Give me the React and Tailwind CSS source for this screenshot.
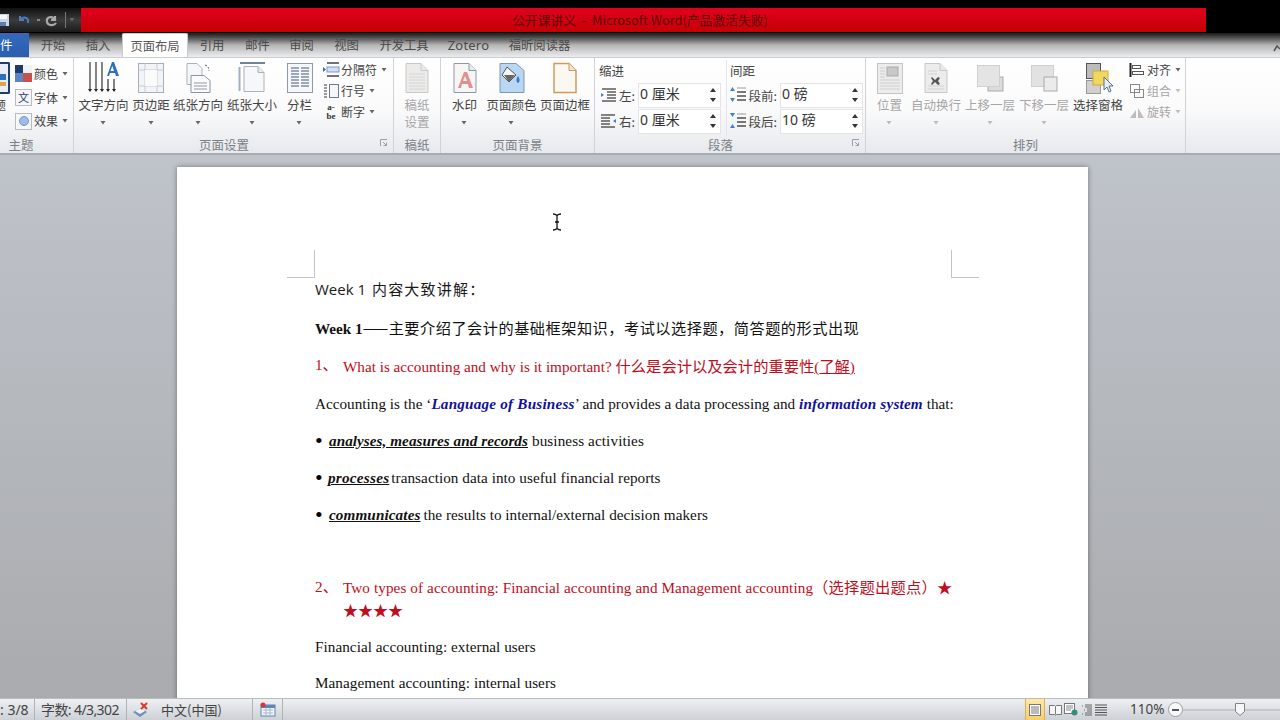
const UI = { fontFamily: '"Noto Sans CJK SC","Noto Sans",sans-serif' };
const SERIF = { fontFamily: '"Liberation Serif","Noto Sans CJK SC",serif' };
const Arrow = ({ className = '' }) => (
  <svg width="7" height="4" viewBox="0 0 7 4" className={className}><path d="M0.5 0h5L3 3.5z" fill="#666" /></svg>
);
const Doc = ({ children, s = 30, fill = '#f6f7f9', stroke = '#a9b2bd' }) => (
  <svg width={s} height="32" viewBox="0 0 30 32">
    <path d="M4 1.500h15l7 7v22H4z" fill={fill} stroke={stroke} />
    <path d="M19 1.500v7h7" fill="#e6e9ee" stroke={stroke} />
    {children}
  </svg>
);
const icons = {
  textdir: (
    <svg width="32" height="32" viewBox="0 0 32 32">
      {[1, 7, 13, 19, 25].map((x, i) => (
        <g key={x}>
          <path d={`M${x + 1} ${i < 3 ? 0 : 17}V28`} stroke="#333" strokeWidth="1.2" />
          <path d={`M${x - 1} 27h4l-2 3z`} fill="#222" />
        </g>
      ))}
      <path d="M19 14 24 0h2l5 14h-3l-1-3h-5l-1 3zM22.500 9h3.500l-1.700-5z" fill="#2f6fc0" />
    </svg>
  ),
  margins: (
    <svg width="30" height="32" viewBox="0 0 30 32">
      <rect x="2.500" y="1.500" width="25" height="29" fill="#f2f4f7" stroke="#a5afbb" />
      <path d="M9 1.500v29M21 1.500v29M2.500 8h25M2.500 24h25" stroke="#c6ccd4" />
      <rect x="9" y="8" width="12" height="16" fill="#fbfbfc" />
    </svg>
  ),
  orient: (
    <svg width="30" height="32" viewBox="0 0 30 32">
      <path d="M4 1.500h10l5 5v16H4z" fill="#f6f7f9" stroke="#a9b2bd" />
      <path d="M8 13.500h13l6 5v12H8z" fill="#fbfbfc" stroke="#8b949f" />
      <path d="M11 21h13M11 24h13M11 27h13" stroke="#8d99a8" />
      <path d="M22 3c3 1 4 3 4 6" stroke="#555" fill="none" strokeDasharray="2 1.500" />
    </svg>
  ),
  size: (
    <svg width="30" height="32" viewBox="0 0 30 32">
      <path d="M3 1h25" stroke="#42597a" strokeWidth="1.500" />
      <path d="M2.500 5v24" stroke="#9fb0c4" strokeWidth="2" />
      <path d="M7 4.500h14l6 6v19H7z" fill="#f6f7f9" stroke="#a9b2bd" />
      <path d="M21 4.500v6h6" fill="#e6e9ee" stroke="#a9b2bd" />
    </svg>
  ),
  cols: (
    <svg width="30" height="32" viewBox="0 0 30 32">
      <rect x="2.500" y="1.500" width="25" height="29" fill="#f6f7f9" stroke="#8f9aa6" />
      {[6, 9, 12, 15, 18, 21, 24].map((y) => (
        <path key={y} d={`M6 ${y}h8M16 ${y}h8`} stroke="#7f8fa3" strokeWidth="1.500" />
      ))}
    </svg>
  ),
  paper: (
    <Doc fill="#ecebea" stroke="#c9c9c9">
      {[12, 15, 18, 21, 24, 27].map((y) => <path key={y} d={`M7 ${y}h16`} stroke="#d6d6d6" />)}
    </Doc>
  ),
  water: (
    <Doc fill="#f8f6f5" stroke="#8d99a8">
      <path d="M8 26 14 10h3l6 16h-4l-1-4h-6l-1 4zM13 19h4l-2-5z" fill="#e58e90" />
    </Doc>
  ),
  color: (
    <svg width="30" height="32" viewBox="0 0 30 32">
      <path d="M3 1.500h16l8 7v22H3z" fill="#b9d6f2" stroke="#8096ad" />
      <path d="M10 5l9 8-7 7-7-7z" fill="#f4f4f4" stroke="#555" />
      <path d="M7 13h11l-6 7z" fill="#666" />
      <path d="M21 14c2 3 2 6 0 7-2-1-2-4 0-7z" fill="#2b7bd0" />
    </svg>
  ),
  border: (
    <svg width="30" height="32" viewBox="0 0 30 32">
      <path d="M4 1.500h15l7 7v22H4z" fill="#fbf8f2" stroke="#d09a5c" strokeWidth="1.500" />
      <path d="M19 1.500v7h7" fill="#f0e3d0" stroke="#c99a60" />
    </svg>
  ),
  pos: (
    <svg width="28" height="32" viewBox="0 0 28 32">
      <rect x="1.500" y="1.500" width="25" height="30" fill="#ececec" stroke="#c4c4c4" />
      <rect x="11" y="5" width="11" height="9" fill="#c8c8c8" stroke="#aaa" />
      {[6, 9, 12, 15].map((y) => <path key={y} d={`M4 ${y}h5`} stroke="#cfcfcf" />)}
      {[18, 21, 24, 27].map((y) => <path key={y} d={`M4 ${y}h20`} stroke="#cfcfcf" />)}
    </svg>
  ),
  wrap: (
    <Doc fill="#ececec" stroke="#c8c8c8">
      {[9, 12, 24, 27].map((y) => <path key={y} d={`M7 ${y}h${y < 15 ? 9 : 16}`} stroke="#d2d2d2" />)}
      <path d="M11 15l3 3 3-3 2 1-2 3 2 3-2 1-3-3-3 3-1-1 2-3-2-3z" fill="#555" />
    </Doc>
  ),
  up: (
    <svg width="30" height="32" viewBox="0 0 30 32">
      <rect x="13" y="15" width="15" height="14" fill="#dcdcdc" stroke="#aaa" />
      <rect x="2.500" y="3.500" width="22" height="21" fill="#e4e4e4" stroke="#d0d0d0" />
    </svg>
  ),
  down: (
    <svg width="30" height="32" viewBox="0 0 30 32">
      <rect x="2.500" y="3.500" width="22" height="21" fill="#e2e2e2" stroke="#d0d0d0" />
      <rect x="15" y="15" width="13" height="14" fill="#ebebeb" stroke="#aaa" />
    </svg>
  ),
  pane: (
    <svg width="30" height="32" viewBox="0 0 30 32">
      <rect x="3.500" y="1.500" width="14" height="15" fill="#bcbcbc" stroke="#555" />
      <rect x="3.500" y="18.500" width="14" height="13" fill="#d0d0d0" stroke="#999" />
      <rect x="10" y="9" width="15" height="14" fill="#f0d860" stroke="#cfa93a" />
      <path d="M21 15v13l3-3 2 5 2-1-2-5h4z" fill="#e8eef6" stroke="#5b6f88" />
    </svg>
  ),
};
const Big = ({ w, icon, label, arrow = true, muted = false, label2 }) => (
  <div className="flex flex-col items-center shrink-0 pt-[4px]" style={{ width: w }}>
    <div className="h-[32px] flex items-center justify-center">{icon}</div>
    <div className={`mt-[2px] text-[12.500px] leading-[17px] whitespace-nowrap ${muted ? 'text-[#a6a6a6]' : 'text-[#444]'}`}>{label}</div>
    {label2 && <div className={`text-[12.500px] leading-[18px] ${muted ? 'text-[#a6a6a6]' : 'text-[#444]'}`}>{label2}</div>}
    {arrow && <Arrow className={`mt-[8px] ${muted ? 'opacity-40' : ''}`} />}
  </div>
);
const Small = ({ icon, label, muted, arrowGap = 'ml-[4px]' }) => (
  <div className="h-[21px] flex items-center">
    <div className="w-[18px] h-[16px] flex items-center justify-center shrink-0">{icon}</div>
    <span className={`ml-[1px] text-[12px] leading-[16px] whitespace-nowrap ${muted ? 'text-[#a6a6a6]' : 'text-[#444]'}`}>{label}</span>
    <Arrow className={`${arrowGap} ${muted ? 'opacity-40' : ''}`} />
  </div>
);
const Group = ({ w, label, launcher, children, labelPad = 'pr-0' }) => (
  <div className="shrink-0 h-full flex flex-col border-r border-[#cfd3d8] relative" style={{ width: w }}>
    <div className="flex-1 flex min-h-0">{children}</div>
    <div className={`h-[20px] pt-[3px] flex items-center justify-center text-[12.500px] leading-[16px] text-[#7a7f86] ${labelPad}`}>{label}</div>
    {launcher && (
      <svg width="8" height="8" viewBox="0 0 8 8" className="absolute right-[5px] bottom-[6px]">
        <path d="M0.500 7V.5H7M3 3l3.500 3.500M6.500 3.500v3h-3" fill="none" stroke="#9aa0a6" />
      </svg>
    )}
  </div>
);
const Spin = ({ icon, label, value, lw }) => (
  <div className="h-[26px] flex items-center">
    <div className="w-[18px] flex justify-center shrink-0">{icon}</div>
    <span className="text-[12.500px] text-[#444] text-right leading-[16px] whitespace-nowrap mr-[3px] mt-[2px]" style={{ width: lw }}>{label}</span>
    <div className="w-[83px] h-[25px] bg-white border border-[#e2e4e7] flex items-center pl-[1px] pr-[3px] justify-between">
      <span className="text-[14px] text-[#333] leading-[16px] -mt-[2px] whitespace-nowrap" style={{ fontFamily: '"Noto Sans","Noto Sans CJK SC",sans-serif' }}>{value}</span>
      <svg width="8" height="16" viewBox="0 0 8 16"><path d="M4 1l3 4H1zM4 15l3-4H1z" fill="#333" /></svg>
    </div>
  </div>
);
const IndentIcon = ({ flip }) => (
  <svg width="17" height="14" viewBox="0 0 17 14">
    {[1, 4, 7, 10, 13].map((y, i) => (
      <path key={y} d={`M${flip ? 1 : i % 4 === 0 ? 2 : 7} ${y}H${flip ? (i % 4 === 0 ? 15 : 10) : 16}`} stroke="#333" strokeWidth="1.200" />
    ))}
    <path d={flip ? 'M16 5l-3 2 3 2z' : 'M1 5l3 2-3 2z'} fill="#3f7fd0" />
  </svg>
);
const SpaceIcon = ({ after }) => (
  <svg width="18" height="18" viewBox="0 0 18 18">
    {[6, 10, 14].map((y) => <path key={y} d={`M8 ${y}h9`} stroke="#333" strokeWidth="1.300" />)}
    <path d="M8 2h9" stroke="#999" />
    <path d={after ? 'M3.500 5 1 1h5zM3.500 12 1 16h5z' : 'M3.500 1 1 5h5zM3.500 16 1 12h5z'} fill="#3f7fd0" />
  </svg>
);
const Tab = ({ w, children, active, className = '' }) => (
  <div
    className={`shrink-0 h-[24px] flex items-center justify-center text-[12.300px] leading-[16px] whitespace-nowrap ${active ? 'bg-white text-[#555] border-x border-t border-[#c8ccd1] rounded-t-[2px]' : 'text-[#4a4a4a]'} ${className}`}
    style={{ width: w }}
  >
    {children}
  </div>
);
const Line = ({ className = '', children }) => (
  <div className={`h-[24px] leading-[24px] whitespace-nowrap ${className}`} style={SERIF}>{children}</div>
);
const Bullet = ({ head, rest, headCls, restCls, offset = '' }) => (
  <Line className="mt-[13px] text-[15.200px] text-[#111] flex">
    <span className="w-[14px] shrink-0 text-[22px] text-black">•</span>
    <b className={`italic underline ${headCls} ${offset}`}>{head}</b>
    <span className={restCls}>{rest}</span>
  </Line>
);

export default function App() {
  return (
    <div className="w-[1280px] h-[720px] overflow-hidden flex flex-col bg-[#aeb0b3]" style={UI}>
      {/* title bar */}
      <div className="h-[33px] shrink-0 bg-black pt-[8px] flex">
        <div className="w-[81px] shrink-0 h-[24px] flex items-center bg-gradient-to-b from-[#111] via-[#3c3c3c] to-[#1c1c1c]">
          <svg width="9" height="14" viewBox="0 0 9 14"><path d="M0 1h9v12H0z" fill="#c9d6e8" /><path d="M0 2h7v4H0z" fill="#f4f6fa" /><path d="M0 9h6v4H0z" fill="#5d7fb0" /></svg>
          <svg width="16" height="14" viewBox="0 0 16 14" className="ml-[7px]"><path d="M4 3v4h4M4 7c3-4 9-3 8 3" fill="none" stroke="#4d79c4" strokeWidth="2" /></svg>
          <span className="ml-[5px] w-[3px] h-[2px] bg-[#888]" />
          <svg width="16" height="14" viewBox="0 0 16 14" className="ml-[4px]"><path d="M11 3v4H7M11 7C8 2 2 4 3 9c1 4 7 4 9 1" fill="none" stroke="#aaa" strokeWidth="2.200" /></svg>
          <span className="ml-[5px] w-px h-[16px] bg-[#777]" />
          <Arrow className="ml-[3px]" />
        </div>
        <div className="w-[1125px] h-[24px] bg-gradient-to-b from-[#e2001c] to-[#c50004] flex items-center justify-center text-[12.800px] text-[#5c0a0a] whitespace-pre pr-[7px]">
          公开课讲义  -  Microsoft Word(产品激活失败)
        </div>
      </div>
      {/* tabs */}
      <div className="h-[24px] shrink-0 flex bg-gradient-to-b from-[#1a1a1a] via-[#b5b5b5] via-[50%] to-[#ecedef] relative">
        <div className="w-[29px] h-[24px] bg-gradient-to-b from-[#3468bb] to-[#2a5fb0] text-white text-[12.500px] leading-[24px] shrink-0 overflow-hidden text-right pr-[17px] whitespace-nowrap">件</div>
        <Tab w={48}>开始</Tab>
        <Tab w={45} className="pr-[3px]">插入</Tab>
        <Tab w={66} active>页面布局</Tab>
        <Tab w={48}>引用</Tab>
        <Tab w={43}>邮件</Tab>
        <Tab w={45}>审阅</Tab>
        <Tab w={45}>视图</Tab>
        <Tab w={70}>开发工具</Tab>
        <Tab w={59}><span style={{ fontFamily: '"Noto Sans",sans-serif' }} className="text-[13px] tracking-[0.2px]">Zotero</span></Tab>
        <Tab w={83}>福昕阅读器</Tab>
        <div className="flex-1" />
        <svg width="7" height="8" viewBox="0 0 7 8" className="mt-[11px]"><path d="M1 7l3-5 3 3" fill="none" stroke="#555" strokeWidth="1.500" /></svg>
      </div>
      {/* ribbon */}
      <div className="h-[98px] shrink-0 flex border-t border-[#c9cdd2] border-b-2 border-b-[#a9adb3] bg-gradient-to-b from-white via-[#fafafb] via-[55%] to-[#e7e9ec]">
        <Group w={74} label="主题" labelPad="pr-[31px]">
          <div className="w-[10px] shrink-0 relative">
            <div className="w-[10px] h-[32px] mt-[4px] bg-[#e9eef6] border-r-2 border-y-2 border-[#1f3e6e] rounded-r-[2px] overflow-hidden">
              <div className="w-[6px] h-[6px] mt-[10px] bg-[#2f6fc0]" />
              <div className="w-[6px] h-[4px] mt-[2px] bg-[#e0a050]" />
            </div>
            <div className="w-[6px] overflow-hidden flex justify-end text-[12.500px] leading-[17px] text-[#444] mt-[2px]">题</div>
          </div>
          <div className="pl-[5px] pt-[4px] flex flex-col">
            <div className="h-[24px] flex items-center">
              <svg width="17" height="17" viewBox="0 0 17 17"><rect width="8" height="8" fill="#1f3a6e" /><rect x="8" width="9" height="8" fill="#f0f0f0" /><rect y="8" width="8" height="9" fill="#5a86c5" /><rect x="8" y="8" width="9" height="9" fill="#c8504b" /></svg>
              <span className="ml-[2px] text-[12px] text-[#444] leading-[16px]">颜色</span><Arrow className="ml-[4px]" />
            </div>
            <div className="h-[24px] flex items-center">
              <div className="w-[17px] h-[17px] border border-[#b5bcc5] bg-[#f6f7f9] text-[11px] leading-[14px] text-center text-[#1f3a6e]">文</div>
              <span className="ml-[2px] text-[12px] text-[#444] leading-[16px]">字体</span><Arrow className="ml-[4px]" />
            </div>
            <div className="h-[24px] flex items-center">
              <div className="w-[17px] h-[17px] border border-[#b5bcc5] bg-[#f6f7f9] flex items-center justify-center"><div className="w-[10px] h-[10px] rounded-full bg-[#9fbbe6] border border-[#7a97c6]" /></div>
              <span className="ml-[2px] text-[12px] text-[#444] leading-[16px]">效果</span><Arrow className="ml-[4px]" />
            </div>
          </div>
        </Group>
        <Group w={320} label="页面设置" launcher labelPad="pr-[19px]">
          <div className="w-[2px] shrink-0" />
          <Big w={55} icon={icons.textdir} label="文字方向" />
          <Big w={40} icon={icons.margins} label="页边距" />
          <Big w={54} icon={icons.orient} label="纸张方向" />
          <Big w={54} icon={icons.size} label="纸张大小" />
          <Big w={41} icon={icons.cols} label="分栏" />
          <div className="pl-[2px] pt-[1px] flex flex-col">
            <Small label="分隔符" icon={<svg width="17" height="16" viewBox="0 0 17 16"><path d="M4 1h12M4 14h12" stroke="#444" strokeWidth="1.500" /><rect x="4" y="5" width="12" height="5" fill="#cfe0f4" stroke="#7a97c6" /><path d="M0 5l3 2.500L0 10z" fill="#2f6fc0" /></svg>} />
            <Small label="行号" icon={<svg width="17" height="16" viewBox="0 0 17 16"><rect x="6.500" y="1.500" width="9" height="13" fill="#f4f6f9" stroke="#6b7a8c" /><path d="M1 2h3M1 5h3M1 8h3M1 11h3M1 14h3" stroke="#333" /></svg>} />
            <Small label="断字" icon={<span className="text-[9px] leading-[9px] font-bold text-[#333] text-center" style={SERIF}>a-<br />be</span>} />
          </div>
        </Group>
        <Group w={47} label="稿纸">
          <Big w={46} icon={icons.paper} label="稿纸" label2="设置" arrow={false} muted />
        </Group>
        <Group w={154} label="页面背景">
          <div className="w-[1px] shrink-0" />
          <Big w={45} icon={icons.water} label="水印" />
          <Big w={49} icon={icons.color} label="页面颜色" />
          <Big w={58} icon={icons.border} label="页面边框" arrow={false} />
        </Group>
        <Group w={271} label="段落" launcher labelPad="pr-[19px]">
          <div className="w-[131px] shrink-0 pl-[4px]">
            <div className="h-[24px] pt-[4px] text-[12.500px] leading-[18px] text-[#444]">缩进</div>
            <Spin icon={<IndentIcon />} label="左:" value="0 厘米" lw={18} />
            <Spin icon={<IndentIcon flip />} label="右:" value="0 厘米" lw={18} />
          </div>
          <div className="pl-[2px] border-l border-[#e4e6e9] h-[76px] mt-[2px]">
            <div className="h-[22px] pt-[2px] pl-[1px] text-[12.500px] leading-[18px] text-[#444]">间距</div>
            <Spin icon={<SpaceIcon />} label="段前:" value="0 磅" lw={30} />
            <Spin icon={<SpaceIcon after />} label="段后:" value="10 磅" lw={30} />
          </div>
        </Group>
        <Group w={320} label="排列">
          <Big w={47} icon={icons.pos} label="位置" muted />
          <Big w={46} icon={icons.wrap} label="自动换行" muted />
          <div className="w-[4px] shrink-0" />
          <Big w={54} icon={icons.up} label="上移一层" muted />
          <Big w={54} icon={icons.down} label="下移一层" muted />
          <Big w={54} icon={icons.pane} label="选择窗格" arrow={false} />
          <div className="pl-[3px] pt-[1px] flex flex-col">
            <Small label="对齐" icon={<svg width="16" height="14" viewBox="0 0 16 14"><path d="M1.500 0v14" stroke="#222" strokeWidth="2" /><rect x="3.500" y="2.500" width="8" height="3" fill="#fff" stroke="#555" /><rect x="3.500" y="8.500" width="11" height="3" fill="#fff" stroke="#555" /></svg>} />
            <Small muted label="组合" icon={<svg width="16" height="16" viewBox="0 0 16 16"><rect x="1.500" y="1.500" width="9" height="8" fill="none" stroke="#888" /><rect x="5.500" y="6.500" width="9" height="8" fill="none" stroke="#888" /></svg>} />
            <Small muted label="旋转" icon={<svg width="16" height="14" viewBox="0 0 16 14"><path d="M1 13 7 5v8zM9 3l6 10H9z" fill="#bdbdbd" /></svg>} />
          </div>
        </Group>
      </div>
      {/* document */}
      <div className="flex-1 min-h-0 overflow-hidden pl-[177px] pt-[12px] bg-gradient-to-b from-[#bfc3ca] to-[#a9abae] relative">
        <div className="w-[911px] h-[600px] bg-white shadow-[0_0_5px_rgba(0,0,0,0.4)] relative pl-[138px] pt-[110px]">
          <div className="absolute left-[110px] top-[83px] w-[28px] h-[28px] border-r border-b border-[#c4c4c4]" />
          <div className="absolute left-[774px] top-[83px] w-[28px] h-[28px] border-l border-b border-[#c4c4c4]" />
          <svg width="10" height="18" viewBox="0 0 10 18" className="absolute left-[375px] top-[46px]">
            <path d="M1 1c2 0 3 .5 4 1.500C6 1.500 7 1 9 1M5 2.500v13M1 17c2 0 3-.5 4-1.500C6 16.500 7 17 9 17M3 9h4" fill="none" stroke="#111" strokeWidth="1.300" />
          </svg>
          <div className="h-[24px] leading-[24px] text-[15px] text-[#1a1a1a] whitespace-nowrap" style={{ fontFamily: '"Open Sans","Noto Sans CJK SC",sans-serif' }}>
            Week 1 <span className="ml-[2px] tracking-[1.200px]" style={UI}>内容大致讲解：</span>
          </div>
          <Line className="mt-[14px] text-[15.200px] text-[#111]"><b>Week 1</b><span style={UI} className="tracking-[0.5px]">——主要介绍了会计的基础框架知识，考试以选择题，简答题的形式出现</span></Line>
          <Line className="mt-[14px] text-[15.200px] text-[#c00d20] flex">
            <span className="w-[28px] shrink-0">1、</span>
            <span>What is accounting and why is it important? <span style={UI} className="text-[15.300px]">什么是会计以及会计的重要性</span><u>(<span style={UI}>了解</span>)</u></span>
          </Line>
          <Line className="mt-[15px] text-[15.200px] text-[#111] tracking-[0.02px]">
            Accounting is the ‘<b className="italic text-[#10109a] tracking-[0.2px]">Language of Business</b>’ and provides a data processing and <b className="italic text-[#10109a] tracking-[0.2px]">information system</b> that:
          </Line>
          <Bullet head="analyses, measures and records" rest="business activities" headCls="tracking-[0.05px]" restCls="ml-[4px] tracking-[0.1px]" />
          <Bullet head="processes" rest="transaction data into useful financial reports" headCls="tracking-[0.25px]" restCls="ml-[2px] tracking-[0.05px]" offset="-ml-[1px]" />
          <Bullet head="communicates" rest="the results to internal/external decision makers" headCls="tracking-[0.1px]" restCls="ml-[3px] tracking-[0.03px]" />
          <div className="mt-[48px] h-[23px] text-[15.200px] leading-[23px] text-[#c00d20] flex whitespace-nowrap tracking-[0.09px]" style={SERIF}>
            <span className="w-[28px] shrink-0">2、</span>
            <span>Two types of accounting: Financial accounting and Management accounting<span style={UI} className="text-[15.300px] tracking-[0.2px]">（选择题出题点）★</span></span>
          </div>
          <div className="h-[23px] pl-[28px] text-[15px] leading-[23px] text-[#c00d20] whitespace-nowrap" style={UI}>★★★★</div>
          <Line className="mt-[14px] text-[15.200px] text-[#111] tracking-[0.05px]">Financial accounting: external users</Line>
          <Line className="mt-[12px] text-[15.200px] text-[#111] tracking-[0.05px]">Management accounting: internal users</Line>
        </div>
      </div>
      {/* status bar */}
      <div className="h-[22px] shrink-0 flex items-center bg-gradient-to-b from-[#eef0f3] to-[#cdd0d5] border-t border-[#b9bcc0] text-[14px] text-[#444] whitespace-nowrap" style={{ fontFamily: '"Noto Sans","Noto Sans CJK SC",sans-serif' }}>
        <div className="w-[35px] h-full pr-[6px] text-right border-r border-[#aeb2b7] leading-[21px] shrink-0">: 3/8</div>
        <div className="w-[92px] h-full pl-[6px] border-r border-[#aeb2b7] leading-[21px] shrink-0 tracking-[-0.6px]">字数: 4/3,302</div>
        <div className="w-[126px] h-full flex items-center pl-[5px] border-r border-[#aeb2b7] shrink-0">
          <svg width="18" height="16" viewBox="0 0 18 16"><path d="M1 10l8-4 6 4-7 5z" fill="#6f8fb8" /><path d="M3 9l6-3 4 3-5 3z" fill="#eef2f7" /><path d="M9 1l6 6M15 1 9 7" stroke="#d43a2f" strokeWidth="2" /></svg>
          <span className="ml-[11px] text-[13px]" style={UI}>中文(中国)</span>
        </div>
        <div className="w-[30px] h-full flex items-center justify-center border-r border-[#aeb2b7] shrink-0">
          <svg width="16" height="15" viewBox="0 0 16 15"><rect x="1" y="3" width="14" height="11" fill="#f4f6f9" stroke="#5d85b8" /><rect x="1" y="3" width="14" height="3" fill="#5d85b8" /><circle cx="3" cy="3" r="2.500" fill="#d43a2f" /><path d="M3 8h10M3 11h10M6 6v8M10 6v8" stroke="#a6b8cf" /></svg>
        </div>
        <div className="flex-1" />
        <div className="w-[20px] h-full bg-gradient-to-b from-[#fde9a8] to-[#f6cf6a] border-x border-[#d8b44e] flex items-center justify-center shrink-0">
          <svg width="12" height="12" viewBox="0 0 12 12"><rect x=".5" y=".5" width="11" height="11" fill="#fff" stroke="#777" /><path d="M2 3h8M2 5h8M2 7h8M2 9h8" stroke="#777" /></svg>
        </div>
        <div className="w-[65px] flex items-center justify-around pl-[3px] pr-[2px] shrink-0">
          <svg width="13" height="12" viewBox="0 0 13 12"><path d="M.5 1.500h5l1 1 1-1h5v9h-5l-1 1-1-1h-5z" fill="#f6f7f9" stroke="#777" /><path d="M6.500 2.500v8" stroke="#777" /></svg>
          <svg width="14" height="13" viewBox="0 0 14 13"><rect x=".5" y=".5" width="10" height="10" fill="#fff" stroke="#777" /><path d="M2 3h7M2 5h7M2 7h5" stroke="#888" /><circle cx="10.500" cy="9.500" r="3" fill="#2f8f7a" /></svg>
          <svg width="12" height="12" viewBox="0 0 12 12"><path d="M4 1h7M4 3h7M6 5h5M6 7h5M4 9h7M4 11h7M1 2h1M3 6h1M1 10h1" stroke="#666" /></svg>
          <svg width="12" height="12" viewBox="0 0 12 12"><path d="M0 1h12M0 3.500h12M0 6h12M0 8.500h12M0 11h12" stroke="#555" strokeWidth="1.200" /></svg>
        </div>
        <div className="w-[60px] flex items-center shrink-0 pl-[20px] text-[13.500px]">110%</div>
        <div className="w-[15px] h-[15px] rounded-full border border-[#9aa0a7] bg-[#f7f8f9] flex items-center justify-center shrink-0 -ml-[2px]"><span className="w-[7px] h-[2px] bg-[#555]" /></div>
        <div className="w-[97px] h-[2px] bg-[#c4c7cb] relative shrink-0">
          <svg width="10" height="13" viewBox="0 0 10 13" className="absolute left-[52px] -top-[6px]"><path d="M.5.5h9v8L5 12.500.5 8.500z" fill="#f6f7f8" stroke="#7d848c" /></svg>
        </div>
      </div>
    </div>
  );
}
